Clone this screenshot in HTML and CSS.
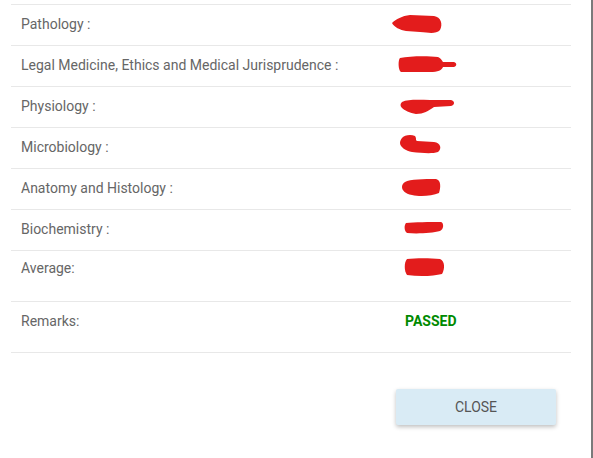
FILE: index.html
```html
<!DOCTYPE html>
<html>
<head>
<meta charset="utf-8">
<link rel="stylesheet" href="styles.css">
</head>
<body>
<div class="page">
  <div class="dialog">
    <div class="grades">
      <div class="row">
        <div class="label">Pathology :</div>
        <div class="value"><svg class="redact" viewBox="0 0 70 24" width="70" height="24"><path d="M2,12 C6,8 12,5 20,4 L44,5 C51,6 53,13 50,19 C46,23 40,22 30,21 L16,20 C10,19 4,16 2,12 Z"/></svg></div>
      </div>
      <div class="row">
        <div class="label">Legal Medicine, Ethics and Medical Jurisprudence :</div>
        <div class="value"><svg class="redact" viewBox="0 0 70 24" width="70" height="24"><path d="M10,6 C20,4 38,4 48,5 C52,7 52,9 53,10 L64,10 C67,11 67,14 64,15 L53,15 C52,18 48,20 40,20 L11,20 C8,18 8,8 10,6 Z"/></svg></div>
      </div>
      <div class="row">
        <div class="label">Physiology :</div>
        <div class="value"><svg class="redact" viewBox="0 0 70 24" width="70" height="24"><path d="M12,9 C18,6 30,7 40,7 L61,7 C65,8 65,12 61,13 L44,14 C38,18 34,21 26,21 C20,20 14,17 12,15 C10,13 10,11 12,9 Z"/></svg></div>
      </div>
      <div class="row">
        <div class="label">Microbiology :</div>
        <div class="value"><svg class="redact" viewBox="0 0 70 24" width="70" height="24"><path d="M12,4 C14,1 21,0 25,2 C27,5 25,6 27,7 L44,8 C51,9 52,15 48,18 C42,20 32,19 22,18 C16,17 10,13 10,9 C10,7 11,5 12,4 Z"/></svg></div>
      </div>
      <div class="row">
        <div class="label">Anatomy and Histology :</div>
        <div class="value"><svg class="redact" viewBox="0 0 70 24" width="70" height="24"><path d="M15,7 C20,4 34,4 46,4 C51,5 51,12 49,18 C42,21 30,22 22,20 C15,19 12,15 12,12 C12,10 13,8 15,7 Z"/></svg></div>
      </div>
      <div class="row">
        <div class="label">Biochemistry :</div>
        <div class="value"><svg class="redact" viewBox="0 0 70 24" width="70" height="24"><path d="M16,7 C24,6 40,6 51,6 C54,7 54,13 50,15 C42,17 28,18 17,17 C14,15 14,9 16,7 Z"/></svg></div>
      </div>
      <div class="row avg">
        <div class="label">Average:</div>
        <div class="value"><svg class="redact" viewBox="0 0 70 24" width="70" height="24"><path d="M17,4 C26,3 40,3 50,4 C55,6 55,14 52,19 C44,21 30,22 17,20 C14,16 14,7 17,4 Z"/></svg></div>
      </div>
      <div class="row remarks">
        <div class="label">Remarks:</div>
        <div class="value passed">PASSED</div>
      </div>
    </div>
    <div class="actions">
      <button class="close-btn">CLOSE</button>
    </div>
  </div>
  <div class="backdrop"></div>
</div>
</body>
</html>
```
FILE: styles.css
```css
html, body {
  margin: 0;
  padding: 0;
  background: #ffffff;
}
body {
  font-family: Roboto, "Liberation Sans", sans-serif;
  font-size: 14px;
  color: #666666;
}
.page {
  display: flex;
  height: 458px;
  overflow: hidden;
}
.dialog {
  width: 591px;
  flex: none;
  background: #ffffff;
}
.backdrop {
  flex: 1;
  background: #7a7a7a;
}
.grades {
  margin: 4px 0 0 11px;
  width: 560px;
  border-top: 1px solid #e8e8e8;
}
.row {
  display: flex;
  align-items: flex-start;
  padding: 11px 0 13px;
  line-height: 16px;
  border-bottom: 1px solid #e8e8e8;
}
.row.avg {
  padding-top: 9px;
  padding-bottom: 25px;
}
.row.remarks {
  padding-top: 11px;
  padding-bottom: 23px;
}
.label {
  width: 384px;
  padding-left: 10px;
  flex: none;
}
.value {
  flex: 1;
  height: 16px;
}
.redact {
  display: block;
  margin: -5px 0 -3px -15px;
  fill: #e31c1c;
}
.passed {
  color: #008a00;
  font-weight: 700;
}
.actions {
  display: flex;
  justify-content: flex-end;
  padding: 36px 35px 0 0;
}
.close-btn {
  width: 160px;
  height: 36px;
  border: none;
  border-radius: 2px;
  background: #d9ebf5;
  color: #555555;
  font-family: Roboto, "Liberation Sans", sans-serif;
  font-size: 14px;
  box-shadow: 0 2px 4px rgba(0, 0, 0, 0.25);
  padding: 0;
}
```
